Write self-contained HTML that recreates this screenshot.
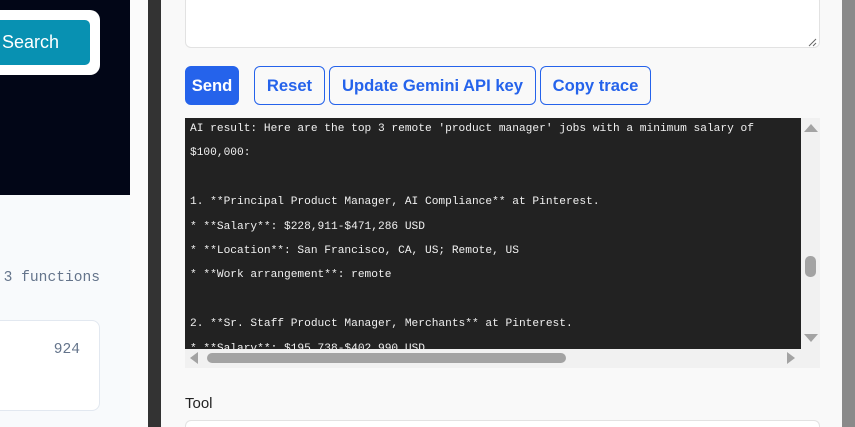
<!DOCTYPE html>
<html style="overflow:hidden;height:427px"><head><style>
*{box-sizing:border-box;margin:0;padding:0}
body{width:855px;height:427px;overflow:hidden;position:relative;background:#f9f9f9;font-family:"Liberation Sans",sans-serif}
.a{position:absolute}
.btn{position:absolute;top:66px;height:39px;border:1px solid #2563eb;border-radius:6px;color:#2563eb;font-weight:bold;font-size:16.6px;display:flex;align-items:center;justify-content:center;background:#f9f9f9}
.term{font-family:"Liberation Mono",monospace;font-size:11.2px;color:#f0f0f0;white-space:pre;line-height:24.4px}
</style></head><body>
<div class="a" style="left:0;top:0;width:130px;height:195px;background:#020617"></div>
<div class="a" style="left:0;top:195px;width:130px;height:232px;background:#f8fafc"></div>
<div class="a" style="left:130px;top:0;width:18px;height:427px;background:#fbfbfb"></div>
<div class="a" style="left:148px;top:0;width:13px;height:427px;background:#333"></div>
<div class="a" style="left:842px;top:0;width:13px;height:427px;background:#8a8a8a"></div>
<div class="a" style="left:-10px;top:10px;width:110px;height:65px;background:#fff;border-radius:10px"></div>
<div class="a" style="left:-10px;top:20px;width:100px;height:45px;background:#0891b2;border-radius:5px;color:#fff;font-size:18px;line-height:45px;padding-left:12px">Search</div>
<div class="a" style="left:-20px;top:270px;width:120px;text-align:right;font-family:'Liberation Mono',monospace;font-size:14.6px;color:#64748b">3 functions</div>
<div class="a" style="left:-10px;top:320px;width:110px;height:91px;background:#fff;border:1px solid #e2e8f0;border-radius:8px"></div>
<div class="a" style="left:30px;top:342px;width:50px;text-align:right;font-family:'Liberation Mono',monospace;font-size:14.6px;color:#64748b">924</div>
<div class="a" style="left:185px;top:-5px;width:635px;height:53px;background:#fff;border:1px solid #e2e2e2;border-radius:6px"></div>
<svg class="a" style="left:808px;top:38px" width="9" height="9"><path d="M1 8L8 1M5 8L8 5" stroke="#666" stroke-width="1"/></svg>
<div class="btn" style="left:185px;width:54px;background:#2563eb;color:#fff">Send</div>
<div class="btn" style="left:254px;width:71px">Reset</div>
<div class="btn" style="left:329px;width:207px">Update Gemini API key</div>
<div class="btn" style="left:540px;width:111px">Copy trace</div>
<div class="a" style="left:185px;top:118px;width:635px;height:250px;background:#f1f1f1"></div>
<div class="a term" style="left:185px;top:118px;width:616px;height:231px;background:#222;overflow:hidden"><div style="margin-top:-1px;margin-left:5px">AI result: Here are the top 3 remote 'product manager' jobs with a minimum salary of
$100,000:

1. **Principal Product Manager, AI Compliance** at Pinterest.
* **Salary**: $228,911-$471,286 USD
* **Location**: San Francisco, CA, US; Remote, US
* **Work arrangement**: remote

2. **Sr. Staff Product Manager, Merchants** at Pinterest.
* **Salary**: $195,738-$402,990 USD</div></div>
<div class="a" style="left:804px;top:124px;width:0;height:0;border-left:7px solid transparent;border-right:7px solid transparent;border-bottom:8px solid #a3a3a3"></div>
<div class="a" style="left:804px;top:334px;width:0;height:0;border-left:7px solid transparent;border-right:7px solid transparent;border-top:8px solid #a3a3a3"></div>
<div class="a" style="left:805px;top:256px;width:11px;height:21px;background:#a3a3a3;border-radius:5px"></div>
<div class="a" style="left:190px;top:352px;width:0;height:0;border-top:6px solid transparent;border-bottom:6px solid transparent;border-right:8px solid #a3a3a3"></div>
<div class="a" style="left:787px;top:352px;width:0;height:0;border-top:6px solid transparent;border-bottom:6px solid transparent;border-left:8px solid #a3a3a3"></div>
<div class="a" style="left:207px;top:353px;width:359px;height:10px;background:#a3a3a3;border-radius:5px"></div>
<div class="a" style="left:185px;top:395px;font-size:15px;color:#222">Tool</div>
<div class="a" style="left:185px;top:420px;width:635px;height:7px;background:#fff;border:1px solid #e2e2e2;border-bottom:none;border-radius:6px 6px 0 0"></div>
</body></html>
